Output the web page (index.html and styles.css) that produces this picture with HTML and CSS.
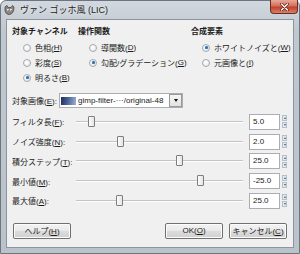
FILE: index.html
```html
<!doctype html>
<html lang="ja">
  <head>
    <meta charset="utf-8"/>
    <title>ヴァン ゴッホ風 (LIC)</title>
    <link rel="stylesheet" href="styles.css">
  </head>
  <body>
    <div class="window">
      <!-- title bar -->
      <div class="titlebar">
        <svg class="app-icon" width="11" height="10" viewBox="0 0 11 10">
          <path d="M1 2 L3 0.5 L4 2.5 L7 2.5 L8.5 0.5 L10 2 L9.5 6 Q8 9.5 5 9.5 Q2 9.5 1 6 Z" fill="#8c8a84" stroke="#4a4843" stroke-width="0.8"/>
          <circle cx="4" cy="5" r="1.1" fill="#fff"/>
          <circle cx="7" cy="5" r="1.1" fill="#fff"/>
          <circle cx="4.2" cy="5.2" r="0.5" fill="#222"/>
          <circle cx="7.2" cy="5.2" r="0.5" fill="#222"/>
        </svg>
        <span class="title">ヴァン ゴッホ風 (LIC)</span>
        <div class="close">
          <svg width="9" height="8" viewBox="0 0 9 8">
            <path d="M1.5 1 L7.5 7 M7.5 1 L1.5 7" stroke="#5a1f14" stroke-width="2.6" stroke-linecap="round"/>
            <path d="M1.5 1 L7.5 7 M7.5 1 L1.5 7" stroke="#fff" stroke-width="1.4" stroke-linecap="round"/>
          </svg>
        </div>
      </div>

      <div class="client">
        <!-- radio groups -->
        <div class="groups">
          <div class="group">
            <div class="group-head">対象チャンネル</div>
            <div class="radio"><span class="dot"></span>色相(<u>H</u>)</div>
            <div class="radio"><span class="dot"></span>彩度(<u>S</u>)</div>
            <div class="radio"><span class="dot on"></span>明るさ(<u>B</u>)</div>
          </div>
          <div class="group">
            <div class="group-head">操作関数</div>
            <div class="radio"><span class="dot"></span>導関数(<u>D</u>)</div>
            <div class="radio"><span class="dot on"></span>勾配/グラデーション(<u>G</u>)</div>
          </div>
          <div class="group">
            <div class="group-head">合成要素</div>
            <div class="radio"><span class="dot on"></span>ホワイトノイズと(<u>W</u>)</div>
            <div class="radio"><span class="dot"></span>元画像と(<u>I</u>)</div>
          </div>
        </div>

        <!-- image selector -->
        <div class="image-row">
          <span class="row-label">対象画像(<u>E</u>):</span>
          <div class="combo">
            <span class="thumb"></span>
            <span class="combo-text">gimp-filter-···/original-48</span>
            <span class="combo-btn"><span class="tri"></span></span>
          </div>
        </div>

        <!-- sliders -->
        <div class="sliders">
          <div class="slider-row">
            <span class="row-label">フィルタ長(<u>F</u>):</span>
            <div class="track"><span class="knob" style="left: 12px"></span></div>
            <div class="spin"><span class="entry">5.0</span><span class="arrows"><i class="up"></i><i class="down"></i></span></div>
          </div>
          <div class="slider-row">
            <span class="row-label">ノイズ強度(<u>N</u>):</span>
            <div class="track"><span class="knob" style="left: 41px"></span></div>
            <div class="spin"><span class="entry">2.0</span><span class="arrows"><i class="up"></i><i class="down"></i></span></div>
          </div>
          <div class="slider-row">
            <span class="row-label">積分ステップ(<u>T</u>):</span>
            <div class="track"><span class="knob" style="left: 100px"></span></div>
            <div class="spin"><span class="entry">25.0</span><span class="arrows"><i class="up"></i><i class="down"></i></span></div>
          </div>
          <div class="slider-row">
            <span class="row-label">最小値(<u>M</u>):</span>
            <div class="track"><span class="knob" style="left: 121px"></span></div>
            <div class="spin"><span class="entry">-25.0</span><span class="arrows"><i class="up"></i><i class="down"></i></span></div>
          </div>
          <div class="slider-row">
            <span class="row-label">最大値(<u>A</u>):</span>
            <div class="track"><span class="knob" style="left: 40px"></span></div>
            <div class="spin"><span class="entry">25.0</span><span class="arrows"><i class="up"></i><i class="down"></i></span></div>
          </div>
        </div>

        <!-- dialog buttons -->
        <div class="buttons">
          <button class="btn">ヘルプ(<u>H</u>)</button>
          <span class="spacer"></span>
          <button class="btn">OK(<u>O</u>)</button>
          <button class="btn">キャンセル(<u>C</u>)</button>
        </div>
      </div>
    </div>
  </body>
</html>
```

FILE: styles.css
```css
/* page */
body{
  margin: 0;
  background: #fff;
  font-family: "Liberation Sans", "Noto Sans CJK JP", sans-serif;
  font-size: 8px;
  color: #1b1b1b;
}
u{
  text-decoration-thickness: 1px;
  text-underline-offset: 1px;
}

/* window frame */
.window{
  width: 300px;
  height: 254px;
  box-sizing: border-box;
  border: 1px solid #6d757e;
  border-radius: 6px 6px 0 0;
  background: linear-gradient(#d2d8df, #bfc7cf 30px, #bac2ca);
  padding: 0 5px 5px 5px;
  display: flex;
  flex-direction: column;
}
.titlebar{
  height: 18px;
  display: flex;
  align-items: flex-start;
}
.app-icon{
  margin: 4px 0 0 -2px;
}
.title{
  margin: 3px 0 0 5px;
  line-height: 12px;
  font-size: 9px;
  color: #222;
  text-shadow: 0 0 4px #fff;
}
.close{
  margin-left: auto;
  margin-right: -4px;
  margin-top: -1px;
  width: 28px;
  height: 14px;
  box-sizing: border-box;
  border: 1px solid #6b2c22;
  border-top: none;
  border-radius: 0 0 4px 4px;
  background: linear-gradient(#e8a898, #d4705c 45%, #c2412b 55%, #d9806a);
  display: flex;
  align-items: center;
  justify-content: center;
}

/* client area */
.client{
  flex: 1;
  background: #f0f0f0;
  border: 1px solid #8c959e;
  padding: 6px 6px 0 5px;
  display: flex;
  flex-direction: column;
}

/* radio groups */
.groups{
  display: grid;
  grid-template-columns: 66px 113px auto;
}
.group-head{
  font-weight: bold;
  line-height: 12px;
  margin-bottom: 2px;
}
.radio{
  height: 15px;
  display: flex;
  align-items: center;
  padding-left: 11px;
  white-space: nowrap;
}
.dot{
  width: 8px;
  height: 8px;
  box-sizing: border-box;
  border-radius: 50%;
  border: 1px solid #a4a9ae;
  background: radial-gradient(circle at 40% 35%, #fff, #e3e5e8);
  margin-right: 4px;
  position: relative;
}
.dot.on::after{
  content: "";
  position: absolute;
  left: 1.5px;
  top: 1.5px;
  width: 3px;
  height: 3px;
  border-radius: 50%;
  background: #2e6fa8;
  box-shadow: 0 0 1px #6fb2e6;
}

/* image combo */
.image-row{
  margin-top: 8px;
  height: 15px;
  display: flex;
  align-items: center;
}
.image-row .row-label{
  width: 47px;
}
.combo{
  width: 124px;
  height: 15px;
  box-sizing: border-box;
  border: 1px solid #abadb3;
  background: #fff;
  display: flex;
  align-items: center;
  padding-left: 1px;
}
.thumb{
  width: 15px;
  height: 8px;
  background: linear-gradient(100deg, #1f2d58, #4b6394 45%, #9db2d2);
  margin-right: 2px;
}
.combo-text{
  flex: 1;
  white-space: nowrap;
  overflow: hidden;
  color: #222;
}
.combo-btn{
  width: 13px;
  height: 13px;
  box-sizing: border-box;
  border: 1px solid #9a9a9a;
  background: linear-gradient(#f6f6f6, #e2e2e2);
  display: flex;
  align-items: center;
  justify-content: center;
}
.tri{
  width: 0;
  height: 0;
  border-left: 2.5px solid transparent;
  border-right: 2.5px solid transparent;
  border-top: 3px solid #111;
}

/* sliders */
.sliders{
  margin-top: 4px;
}
.slider-row{
  height: 19.75px;
  display: flex;
  align-items: center;
}
.slider-row .row-label{
  width: 64px;
  white-space: nowrap;
}
.track{
  width: 167px;
  height: 2px;
  border-top: 1px solid #c3c3c3;
  box-sizing: border-box;
  background: #fff;
  position: relative;
  margin-right: 6px;
}
.knob{
  position: absolute;
  top: -6px;
  width: 7px;
  height: 11px;
  box-sizing: border-box;
  border: 1px solid #7e7e7e;
  border-radius: 1px;
  background: linear-gradient(90deg, #fdfdfd, #e4e4e4);
}
.spin{
  display: flex;
  align-items: center;
}
.entry{
  width: 31px;
  height: 16px;
  box-sizing: border-box;
  border: 1px solid #abadb3;
  background: #fff;
  padding-left: 3px;
  line-height: 14px;
}
.arrows{
  margin-left: 2px;
  display: flex;
  flex-direction: column;
  gap: 1px;
}
.arrows i{
  width: 5px;
  height: 6px;
  box-sizing: border-box;
  border: 1px solid #b5bfcc;
  background: #e4eaf2;
  position: relative;
}
.arrows i::after{
  content: "";
  position: absolute;
  left: 0.5px;
  top: 1px;
  border-left: 1px solid transparent;
  border-right: 1px solid transparent;
}
.arrows .up::after{
  border-bottom: 2px solid #4a5a70;
}
.arrows .down::after{
  border-top: 2px solid #4a5a70;
}

/* buttons */
.buttons{
  margin-top: 12px;
  display: flex;
  gap: 6px;
  padding-left: 1px;
}
.spacer{
  flex: 1;
}
.btn{
  width: 58px;
  height: 16px;
  padding: 0;
  font-family: inherit;
  font-size: 8px;
  color: #1b1b1b;
  border: 1px solid #707070;
  border-radius: 2px;
  background: linear-gradient(#f3f3f3, #ebebeb 45%, #dddddd 50%, #cfcfcf);
  box-shadow: inset 0 0 0 1px #fcfcfc;
}
```
